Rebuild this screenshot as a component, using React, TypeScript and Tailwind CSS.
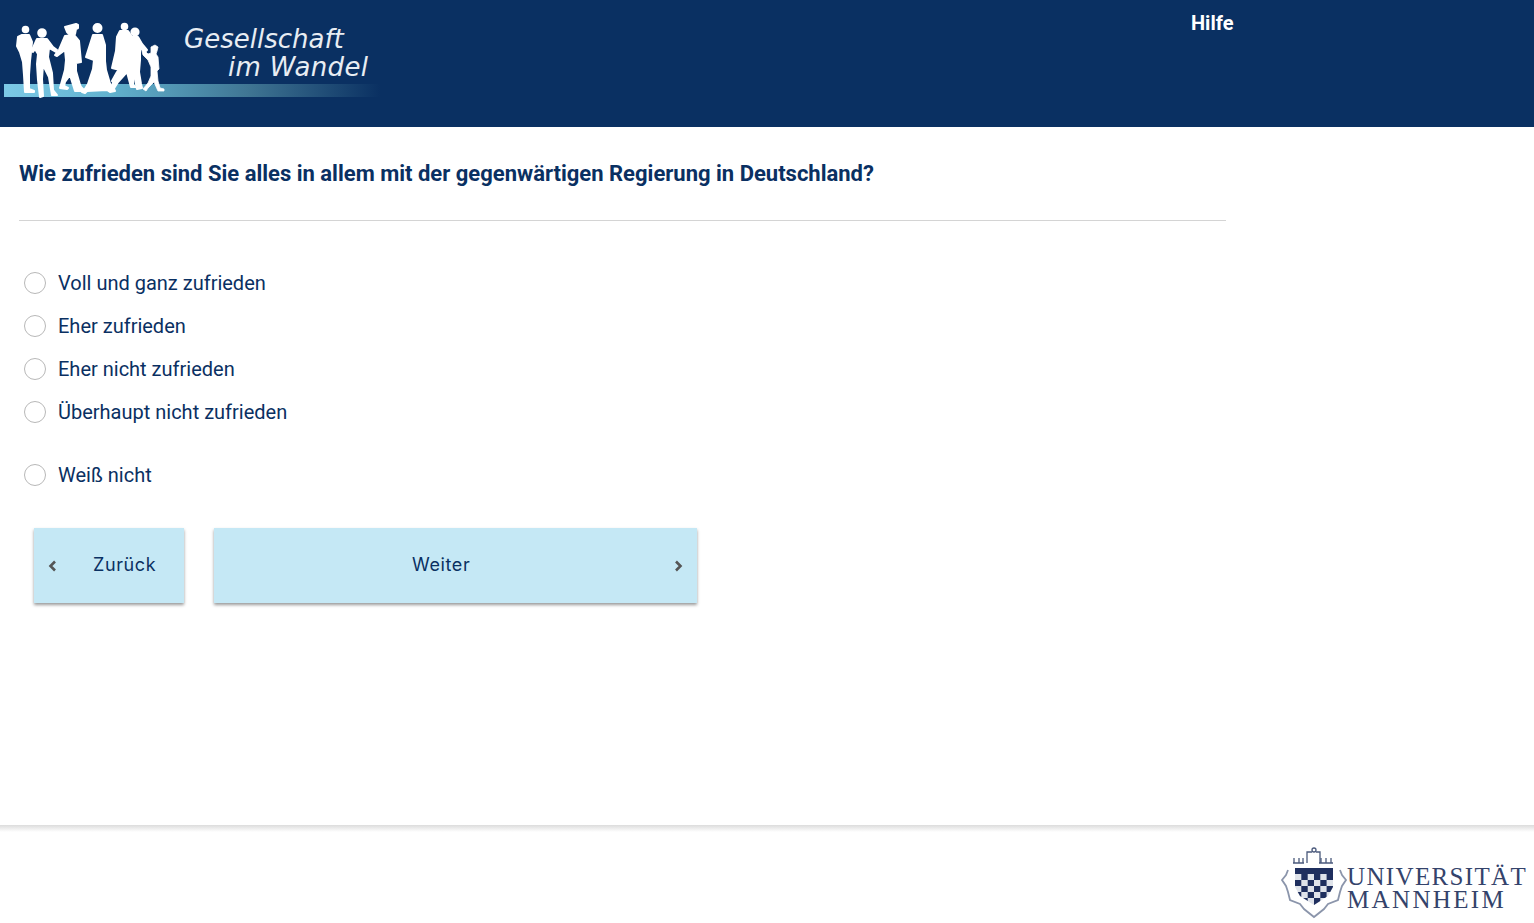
const options = [
  { label: 'Voll und ganz zufrieden', cls: 'mt-0' },
  { label: 'Eher zufrieden', cls: 'mt-[21px]' },
  { label: 'Eher nicht zufrieden', cls: 'mt-[21px]' },
  { label: 'Überhaupt nicht zufrieden', cls: 'mt-[21px]' },
  { label: 'Weiß nicht', cls: 'mt-[41px]' },
]

function HeaderLogo() {
  return (
    <svg width="400" height="127" viewBox="0 0 400 127" className="block shrink-0">
      <defs>
        <linearGradient id="band" x1="0" x2="1" y1="0" y2="0">
          <stop offset="0" stopColor="#7cc9e6" />
          <stop offset="0.28" stopColor="#62b2cf" />
          <stop offset="0.65" stopColor="#3f7593" />
          <stop offset="1" stopColor="#0a3062" />
        </linearGradient>
      </defs>
      <rect x="4" y="84" width="376" height="13" fill="url(#band)" />
      <g fill="#ffffff" stroke="#ffffff" strokeWidth="2" strokeLinejoin="round">
        <circle cx="25.5" cy="29.5" r="2.800" />
        <path d="M22 35l7 0 3 7-1 10-1 9-1 14 0 14 5 2 0 1-9 0-1-17-1-13-3-10-3-6 1-9z" />
        <circle cx="42" cy="33" r="3.800" />
        <path d="M37 39l10 0 6 8 4 3-1 2-7-4-1 9 4 16 1 17 4 5-5 0-3-18-6-12-1 14 1 17-3 1-2-17-1-16 1-10-3-5-2 3-1-2z" />
        <path d="M65 27l11-3 2 1 0 3-2 1-1 5-5 1-3-3z" />
        <path d="M65 36l9-1 5 6 2 21-5 1 0 8 4 14 1 2 3 3-2 1-7 0-5-16-5 7-1 4 4 2-1 1-7-1 5-18 1-10-1-10-4 3-4 3-2-1 4-5z" />
        <circle cx="97.5" cy="28" r="4" />
        <path d="M93 35l9 0 3 10 0 16 1 9 5 17 3 2 1 2-5 1-3-2-20 1-2 2-3-1 3-3 3-5 5-15 1-9-8-3z" />
        <circle cx="124.5" cy="26.500" r="2.800" />
        <path d="M120 31l8 0 4 6 0 14 2 20-1 14 3 2-5 0-4-15-9 10-5 8-3-1 4-8 8-10-2-1-8-2 4-17 1-14z" />
        <circle cx="135" cy="32" r="3.600" />
        <path d="M131 37l7 0 4 7 5 6-1 1-6-3 0 12-1 12 2 12 1 4-5 1-3-15-6-7-9 8-5 8-2-2 5-9 7-9 4-9 1-10z" />
        <path d="M141 47l7 7 3-1 0-4 0-2 4-2 3 2-1 4-1 3 2 3 1 12-2 2 1 10 2 7 4 1 0 2-6 0-4-9-6 6-2 3-3-2 5-6 3-7 0-9-3-7-5-5z" strokeWidth="0.8" />
      </g>
      <text x="184" y="47.500" fill="#e8edf3" fontFamily="'DejaVu Sans', sans-serif" fontStyle="italic" fontSize="26">
        Gesellschaft
      </text>
      <text x="228" y="75.500" fill="#e8edf3" fontFamily="'DejaVu Sans', sans-serif" fontStyle="italic" fontSize="26" letterSpacing="0.35">
        im Wandel
      </text>
    </svg>
  )
}

function MannheimLogo() {
  return (
    <svg width="254" height="74" viewBox="0 0 254 74" className="block">
      <defs>
        <clipPath id="shield">
          <path d="M15 23h38v19l-5 9-14 9-14-9-5-9z" />
        </clipPath>
      </defs>
      <g fill="none" stroke="#4b5a7c" strokeWidth="1.3">
        <path d="M13 18h11M14 13v5M19 13v5M23 13v5M39 18h14M41 13v5M46 13v5M51 13v5" />
        <path d="M27 18v-11h5M36 7h4v11" />
        <circle cx="34" cy="5" r="2" />
        <path
          d="M8 25l-2 5-4 5 4 6 2 6 2 8 10 4 4 5 10 8 10-8 4-5 10-4 2-8 2-6 4-6-4-5-2-5"
          stroke="#8b95ab"
          strokeWidth="1.8"
        />
      </g>
      <g clipPath="url(#shield)">
        <rect x="15" y="23" width="38" height="38" fill="#dfe3ea" />
        <g fill="#1f2f5e">
          <path d="M15 23h38v6H15zM21.300 29h6.400v6h-6.400zM34 29h6.300v6H34zM46.600 29H53v6h-6.400zM15 35h6.300v6H15zM27.700 35h6.300v6h-6.300zM40.300 35h6.300v6h-6.300zM21.300 41h6.400v6h-6.400zM34 41h6.300v6H34zM46.600 41H53v6h-6.400zM15 47h6.300v6H15zM27.700 47h6.300v6h-6.300zM40.300 47h6.300v6h-6.300zM21.300 53h6.400v7h-6.400zM34 53h6.300v7H34z" />
        </g>
      </g>
      <text x="67" y="39.500" fill="#34436b" fontFamily="'Liberation Serif', serif" fontSize="25" letterSpacing="1.35">
        UNIVERSITÄT
      </text>
      <text x="67" y="63" fill="#34436b" fontFamily="'Liberation Serif', serif" fontSize="25" letterSpacing="2.35">
        MANNHEIM
      </text>
    </svg>
  )
}

export default function App() {
  return (
    <div className="h-[923px] overflow-hidden bg-white flex flex-col font-['Roboto',sans-serif] text-[#0a3062]">
      {/* Header */}
      <header className="h-[127px] shrink-0 bg-[#0a3062] flex">
        <HeaderLogo />
        <a className="ml-[791px] mt-[10px] text-[20px] leading-[26px] font-bold text-white">Hilfe</a>
      </header>

      {/* Frage */}
      <main className="flex-1 pl-[19px]">
        <div className="w-[1207px] pt-[32px] pb-[32px] border-b border-[#d4d4d4]">
          <h1 className="text-[22px] leading-[29px] font-bold">
            Wie zufrieden sind Sie alles in allem mit der gegenwärtigen Regierung in Deutschland?
          </h1>
        </div>

        <div className="mt-[51px] flex flex-col pl-[5px]">
          {options.map((o) => (
            <label key={o.label} className={`flex items-center h-[22px] ${o.cls}`}>
              <span className="w-[22px] h-[22px] rounded-full border border-[#b8b8b8] bg-white shrink-0"></span>
              <span className="ml-[12px] text-[20px] leading-[22px] whitespace-nowrap">{o.label}</span>
            </label>
          ))}
        </div>

        {/* Buttons */}
        <div className="mt-[42px] ml-[15px] flex gap-[30px]">
          <button className="w-[150px] h-[75px] bg-[#c5e8f5] shadow-[0_2px_3px_rgba(0,0,0,0.4)] flex items-center pl-[14px]">
            <svg width="10" height="12" viewBox="0 0 10 12" className="shrink-0">
              <path d="M7 1.500L2.500 6 7 10.500" fill="none" stroke="#555" strokeWidth="2.600" />
            </svg>
            <span className="ml-[35px] -mt-[2px] font-['Inter',sans-serif] text-[18px] tracking-[0.6px]">Zurück</span>
          </button>
          <button className="w-[483px] h-[75px] bg-[#c5e8f5] shadow-[0_2px_3px_rgba(0,0,0,0.4)] flex items-center pl-[198px] pr-[14px] justify-between">
            <span className="-mt-[2px] font-['Inter',sans-serif] text-[18px] tracking-[0.6px]">Weiter</span>
            <svg width="10" height="12" viewBox="0 0 10 12" className="shrink-0">
              <path d="M3 1.500L7.500 6 3 10.500" fill="none" stroke="#555" strokeWidth="2.600" />
            </svg>
          </button>
        </div>
      </main>

      {/* Footer */}
      <footer className="h-[98px] shrink-0 flex flex-col">
        <div className="h-[7px] bg-linear-to-b from-[#dcdcdc] to-white"></div>
        <div className="mt-[13px] flex justify-end">
          <MannheimLogo />
        </div>
      </footer>
    </div>
  )
}
